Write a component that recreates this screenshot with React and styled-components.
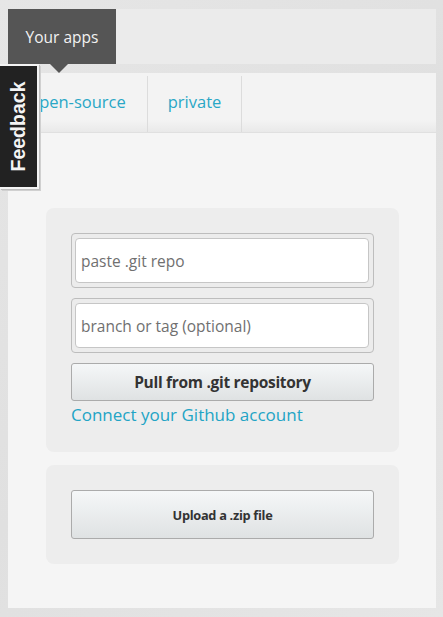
import React from "react";
import styled, { createGlobalStyle } from "styled-components";

const GlobalStyle = createGlobalStyle`
  html, body {
    margin: 0;
    padding: 0;
    background: #e3e3e3;
    font-family: "Open Sans", "Liberation Sans", sans-serif;
  }
`;

const Page = styled.div`
  position: relative;
  width: 428px;
  padding: 9px 7px 10px 8px;
  background: linear-gradient(135deg, #e6e6e6 0%, #e0e0e0 50%, #e6e6e6 100%);
`;

const Header = styled.div`
  display: flex;
  height: 55px;
  background: #ebebeb;
`;

const AppsTab = styled.div`
  position: relative;
  width: 108px;
  display: flex;
  align-items: center;
  justify-content: center;
  background: #555555;
  color: #f2f2f2;
  font-size: 15.5px;

  &::after {
    content: "";
    position: absolute;
    left: 42px;
    bottom: -9px;
    border-left: 9px solid transparent;
    border-right: 9px solid transparent;
    border-top: 9px solid #555555;
  }
`;

const Tabs = styled.div`
  display: flex;
  height: 59px;
  margin-top: 9px;
  background: linear-gradient(to bottom, #f3f3f3 0%, #f3f3f3 80%, #e9e9e9 100%);
  border-bottom: 1px solid #e0e0e0;
`;

const Tab = styled.div`
  display: flex;
  align-items: center;
  justify-content: center;
  width: ${({ $w }) => $w}px;
  border-right: 1px solid #dcdcdc;
  color: #29a7c6;
  font-size: 16.5px;
  margin: 3px 0 0;
  padding-bottom: 6px;
`;

const Content = styled.div`
  background: #f5f5f5;
  padding: 75px 37px 44px 38px;
  display: flex;
  flex-direction: column;
  gap: 13px;
`;

const Card = styled.div`
  background: #ededed;
  border-radius: 8px;
  padding: 25px 25px ${({ $pb }) => $pb}px;
  display: flex;
  flex-direction: column;
  gap: 10px;
`;

const Field = styled.div`
  border: 1px solid #bdbdbd;
  border-radius: 4px;
  padding: 4px 4px 4px 3px;
  background: #ececec;
`;

const Input = styled.input`
  box-sizing: border-box;
  width: 100%;
  height: 45px;
  border: 1px solid #c6c6c6;
  border-radius: 4px;
  background: #ffffff;
  padding: 0 5px;
  font-family: inherit;
  font-size: 15.5px;
  color: #666;
  outline: none;

  &::placeholder {
    color: #707070;
  }
`;

const Button = styled.button`
  height: ${({ $h }) => $h}px;
  border: 1px solid #ababab;
  border-radius: 3px;
  background: linear-gradient(to bottom, #f5f7f8 0%, #dfe2e3 100%);
  color: #333;
  font-family: inherit;
  font-weight: 700;
  font-size: ${({ $fs }) => $fs}px;
  letter-spacing: -0.3px;
  cursor: pointer;
`;

const Link = styled.a`
  color: #22a4c5;
  font-size: 17px;
  text-decoration: none;
  margin-top: -7px;
  line-height: 22px;
`;

const Feedback = styled.div`
  position: absolute;
  left: 0;
  top: 64px;
  width: 37px;
  height: 121px;
  background: #222222;
  border: 2px solid #f4f4f4;
  border-left: none;
  box-shadow: 1px 1px 0 #bdbdbd, 2px 2px 0 #d0d0d0;
  display: flex;
  align-items: center;
  justify-content: center;

  span {
    transform: rotate(-90deg);
    color: #f4f4f4;
    font-family: "Liberation Sans", Arial, sans-serif;
    font-weight: 700;
    font-size: 19.5px;
    white-space: nowrap;
  }
`;

export default function App() {
  return (
    <>
      <GlobalStyle />
      <Page>
        <Header>
          <AppsTab>Your apps</AppsTab>
        </Header>
        <Tabs>
          <Tab $w={139}>open-source</Tab>
          <Tab $w={93}>private</Tab>
        </Tabs>
        <Content>
          <Card $pb={26}>
            <Field>
              <Input placeholder="paste .git repo" />
            </Field>
            <Field>
              <Input placeholder="branch or tag (optional)" />
            </Field>
            <Button $h={38} $fs={15.5}>Pull from .git repository</Button>
            <Link href="#">Connect your Github account</Link>
          </Card>
          <Card $pb={25}>
            <Button $h={49} $fs={12.8}>Upload a .zip file</Button>
          </Card>
        </Content>
        <Feedback>
          <span>Feedback</span>
        </Feedback>
      </Page>
    </>
  );
}
